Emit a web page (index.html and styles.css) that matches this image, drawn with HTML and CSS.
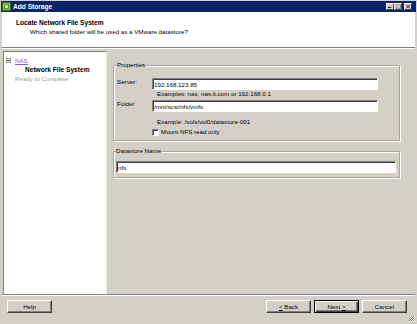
FILE: index.html
```html
<!DOCTYPE html>
<html lang="en">
<head>
    <meta charset="UTF-8">
    <title>Add Storage</title>
    <link rel="stylesheet" href="styles.css">
</head>
<body>
    <div class="window">
        <div class="titlebar">
            <svg class="app-icon" width="9" height="9" viewBox="0 0 9 9">
                <rect x="0" y="0" width="9" height="9" fill="#3d6e1c"/>
                <rect x="1" y="1" width="7" height="7" fill="#8fc04a"/>
                <rect x="2" y="2" width="5" height="5" fill="#5c9428"/>
                <rect x="3" y="3" width="3" height="3" fill="#c8e49a"/>
            </svg>
            <span class="title-text">Add Storage</span>
            <div class="caption-buttons">
                <span class="cap-btn">
                    <svg width="7" height="5" viewBox="0 0 7 5"><rect x="1" y="3" width="4" height="1" fill="#000"/></svg>
                </span>
                <span class="cap-btn cap-disabled">
                    <svg width="7" height="5" viewBox="0 0 7 5"><rect x="1.5" y="0.5" width="5" height="4" fill="none" stroke="#8a877f"/></svg>
                </span>
                <span class="cap-btn cap-close">
                    <svg width="7" height="5" viewBox="0 0 7 5"><path d="M1.5 0.5 L5.5 4.5 M5.5 0.5 L1.5 4.5" stroke="#000"/></svg>
                </span>
            </div>
        </div>

        <div class="header">
            <div class="header-title">Locate Network File System</div>
            <div class="header-sub">Which shared folder will be used as a VMware datastore?</div>
        </div>

        <div class="main">
            <div class="steps">
                <div class="step step-group"><span class="tree-box"></span><a class="step-link">NAS</a></div>
                <div class="step step-current">Network File System</div>
                <div class="step step-todo">Ready to Complete</div>
            </div>

            <div class="content">
                <fieldset class="group">
                    <legend>Properties</legend>
                    <div class="field field-first">
                        <label for="server">Server:</label>
                        <input type="text" id="server" class="textbox" value="192.168.123.85">
                    </div>
                    <div class="hint">Examples: nas, nas.it.com or 192.168.0.1</div>
                    <div class="field">
                        <label for="folder">Folder</label>
                        <input type="text" id="folder" class="textbox" value="/mnt/scsi/nfs/vmfs">
                    </div>
                    <div class="hint hint-spaced">Example: /vols/vol0/datastore-001</div>
                    <div class="check-row">
                        <input type="checkbox" id="readonly" class="check">
                        <label for="readonly">Mount NFS read only</label>
                    </div>
                </fieldset>

                <fieldset class="group group-name">
                    <legend>Datastore Name</legend>
                    <input type="text" class="textbox textbox-wide" value="nfs">
                </fieldset>
            </div>
        </div>

        <div class="footer">
            <button class="btn">Help</button>
            <div class="nav-buttons">
                <button class="btn"><u>&lt;</u> Back</button>
                <button class="btn btn-default">Next <u>&gt;</u></button>
                <button class="btn">Cancel</button>
            </div>
            <svg class="grip" width="7" height="7" viewBox="0 0 7 7">
                <path d="M6 1 L1 6 M6 3 L3 6 M6 5 L5 6" stroke="#808080"/>
                <path d="M7 1 L1 7 M7 3 L3 7 M7 5 L5 7" stroke="#fff"/>
            </svg>
        </div>
    </div>
</body>
</html>
```

FILE: styles.css
```css
body {
    margin: 0;
    background: #d4d0c8;
    font-family: "Liberation Sans", Arial, sans-serif;
    font-size: 6.2px;
    color: #000;
    overflow: hidden;
}
.window {
    width: 417px;
    height: 324px;
    box-sizing: border-box;
    padding: 1px 2px 0 2px;
    display: flex;
    flex-direction: column;
}

/* title bar */
.titlebar {
    height: 11px;
    margin: 0 -1px;
    background: #0a246a;
    display: flex;
    align-items: center;
    padding-left: 1px;
    color: #fff;
    font-weight: bold;
    font-size: 6.6px;
}
.app-icon {
    display: block;
    margin-right: 2px;
}
.caption-buttons {
    margin-left: auto;
    margin-right: 4px;
    display: flex;
}
.cap-btn {
    width: 8px;
    height: 7px;
    box-sizing: border-box;
    background: #d4d0c8;
    border: 1px solid;
    border-color: #fff #404040 #404040 #fff;
    display: flex;
    align-items: center;
    justify-content: center;
}
.cap-btn svg {
    display: block;
}
.cap-close {
    margin-left: 2px;
}

/* header */
.header {
    height: 36px;
    box-sizing: border-box;
    background: #fff;
    padding: 7px 0 0 14px;
    border-bottom: 1px solid #808080;
}
.header-title {
    font-weight: bold;
    font-size: 6.6px;
    line-height: 8px;
}
.header-sub {
    padding-left: 14px;
    margin-top: 1px;
    line-height: 8px;
}

/* main area */
.main {
    flex: 1;
    display: flex;
    border-top: 1px solid #fff;
    padding: 2px 0 0 1px;
    min-height: 0;
}
.steps {
    width: 104px;
    box-sizing: border-box;
    background: #fff;
    border: 1px solid;
    border-color: #808080 #e8e6e0 #fff #808080;
    border-bottom: none;
    padding-top: 4px;
    line-height: 9px;
}
.step-group {
    display: flex;
    align-items: center;
    padding-left: 2px;
}
.tree-box {
    width: 5px;
    height: 5px;
    box-sizing: border-box;
    border: 1px solid #9a9a9a;
    margin-right: 4px;
    position: relative;
}
.tree-box::after {
    content: "";
    position: absolute;
    left: 0;
    top: 1px;
    width: 3px;
    height: 1px;
    background: #404040;
}
.step-link {
    color: #7a5cc6;
    text-decoration: underline;
}
.step-current {
    padding-left: 21px;
    font-weight: bold;
    font-size: 6.6px;
}
.step-todo {
    padding-left: 11px;
    color: #9a9a9a;
}

.content {
    flex: 1;
    padding: 10px 15px 0 6px;
}
.group {
    margin: 0;
    padding: 0 3px 4px 3px;
    border: 1px solid #a8a59e;
    box-shadow: inset 1px 1px 0 #fff, 1px 1px 0 #fff;
    min-width: 0;
}
.group legend {
    padding: 0 1px 0 0;
    line-height: 8px;
    background: #d4d0c8;
    position: relative;
}
.field {
    display: flex;
    align-items: flex-start;
    margin-top: 2px;
}
.field-first {
    margin-top: 9px;
}
.field label {
    width: 35px;
    line-height: 8px;
}
.textbox {
    width: 226px;
    height: 12px;
    box-sizing: border-box;
    margin: 0;
    padding: 0 1px;
    border: 1px solid;
    border-color: #808080 #fff #fff #808080;
    box-shadow: inset 1px 1px 0 #404040;
    background: #fff;
    font-family: inherit;
    font-size: 6.2px;
    color: #000;
    outline: none;
}
.hint {
    margin-left: 40px;
    line-height: 8px;
}
.hint-spaced {
    margin-top: 6px;
}
.check-row {
    display: flex;
    align-items: center;
    margin: 2px 0 0 35px;
    line-height: 8px;
}
.check {
    appearance: none;
    width: 7px;
    height: 7px;
    margin: 0 2px 0 0;
    box-sizing: border-box;
    background: #fff;
    border: 1px solid;
    border-color: #808080 #fff #fff #808080;
    box-shadow: inset 1px 1px 0 #404040;
}

.group-name {
    margin-top: 6px;
    padding-left: 2px;
}
.textbox-wide {
    width: 280px;
    margin-top: 6px;
}

/* footer buttons */
.footer {
    height: 30px;
    box-sizing: border-box;
    border-top: 1px solid #808080;
    box-shadow: inset 0 1px 0 #fff;
    display: flex;
    align-items: flex-start;
    padding: 5px 0 0 5px;
}
.nav-buttons {
    margin-left: auto;
    display: flex;
    gap: 3px;
}
.btn {
    width: 45px;
    height: 13px;
    box-sizing: border-box;
    margin: 0;
    padding: 0;
    background: #d4d0c8;
    border: 1px solid;
    border-color: #fff #404040 #404040 #fff;
    box-shadow: inset -1px -1px 0 #808080;
    font-family: inherit;
    font-size: 6.2px;
    color: #000;
}
.btn-default {
    border-color: #000;
    box-shadow: inset 1px 1px 0 #fff, inset -1px -1px 0 #404040, inset -2px -2px 0 #808080;
}
.grip {
    display: block;
    align-self: flex-end;
    margin: 0 0 2px 1px;
}
```
